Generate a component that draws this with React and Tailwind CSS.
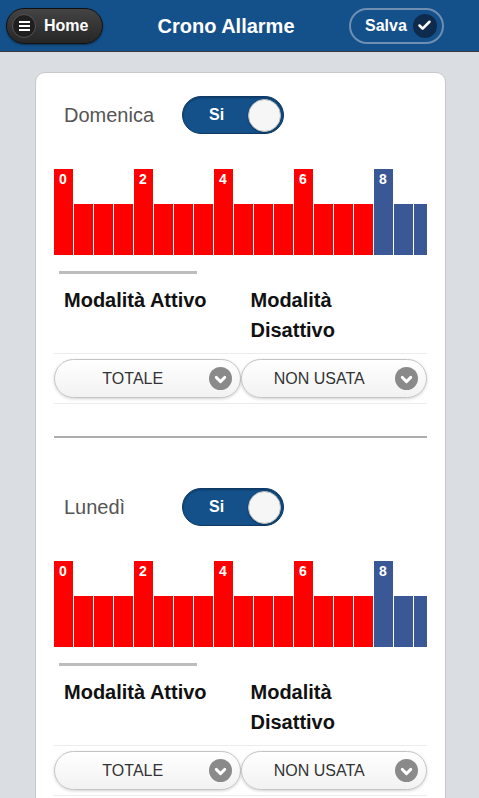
import { Check, ChevronDown } from 'lucide-react';

const days = ['Domenica', 'Lunedì'];

const bars = Array.from({ length: 19 }, (_, i) => ({
  tall: i % 4 === 0,
  label: i % 4 === 0 ? String(i / 2) : null,
  blue: i >= 16,
}));

const Toggle = () => (
  <div className="w-[102px] h-[38px] rounded-full bg-[#14508a] border border-[#0d3a66] flex items-center pl-[26px] pr-[2px] shadow-[inset_0_1px_2px_rgba(0,0,0,0.3)]">
    <span className="flex-1 text-white font-bold text-[16px]">Si</span>
    <div className="w-[33px] h-[33px] rounded-full bg-[#f6f6f6] border border-[#bbb] shadow-[0_1px_2px_rgba(0,0,0,0.3)]" />
  </div>
);

const SelectBox = ({ label }) => (
  <div className="flex-1 h-[39px] rounded-full border border-[#c4c4c4] bg-gradient-to-b from-white to-[#f2f2f2] shadow-[0_1px_3px_rgba(0,0,0,0.18)] flex items-center pl-4 pr-[8px]">
    <span className="flex-1 text-center text-[16px] text-[#333] pr-[14px]">{label}</span>
    <span className="w-[23px] h-[23px] rounded-full bg-[#8a8a8a] flex items-center justify-center">
      <ChevronDown size={17} strokeWidth={4} className="text-white mt-px" />
    </span>
  </div>
);

const DaySection = ({ name, first, last }) => (
  <div className={last ? '' : 'border-b-2 border-[#adadad] pb-8'}>
    <div className={`flex items-center h-[38px] pl-[10px] ${first ? 'mt-[23px]' : 'mt-[50px]'}`}>
      <span className="text-[20px] text-[#555] w-[118px]">{name}</span>
      <Toggle />
    </div>

    {/* chart */}
    <div className="mt-[35px] h-[86px] overflow-hidden flex items-end gap-px">
      {bars.map((b, i) => (
        <div
          key={i}
          className={`shrink-0 w-[19px] ${b.tall ? 'h-[86px]' : 'h-[51px]'} ${b.blue ? 'bg-[#3a5896]' : 'bg-[#ff0000]'} text-white font-bold text-[14px] leading-none pl-[5px] pt-[3px]`}
        >
          {b.label}
        </div>
      ))}
    </div>

    <div className="ml-[5px] mt-[16px] w-[138px] h-[3px] bg-[#bdbdbd]" />

    <div className="grid grid-cols-2 mt-[11px] pl-[10px] text-[20px] font-bold text-[#111] leading-[30px]">
      <div>Modalità Attivo</div>
      <div className="pl-[5px]">Modalità<br />Disattivo</div>
    </div>

    <div className="mt-[8px] border-t border-b border-[#ececec] py-[5px] flex">
      <SelectBox label="TOTALE" />
      <SelectBox label="NON USATA" />
    </div>
  </div>
);

export default function App() {
  return (
    <div className="min-h-[798px] bg-[#dadde1] font-['Liberation_Sans',Arial,sans-serif]">
      <header className="h-[52px] bg-[#14508a] border-b border-[#3a3a3a] flex items-center px-[6px]">
        <button className="w-[97px] h-[36px] rounded-full bg-gradient-to-b from-[#444] to-[#262626] border border-[#111] flex items-center pl-[5px] gap-[8px] shadow-[0_1px_2px_rgba(0,0,0,0.4)]">
          <span className="w-[24px] h-[24px] rounded-full bg-[#1f1f1f] border border-[#555] flex flex-col items-center justify-center gap-[2px]">
            <span className="w-[11px] h-[2px] bg-white" />
            <span className="w-[11px] h-[2px] bg-white" />
            <span className="w-[11px] h-[2px] bg-white" />
          </span>
          <span className="text-white font-bold text-[16px]">Home</span>
        </button>
        <h1 className="flex-1 text-center text-white font-bold text-[20px]">Crono Allarme</h1>
        <button className="w-[95px] h-[36px] mr-[29px] rounded-full border-2 border-[#6e8fb2] flex items-center pl-[14px] gap-[6px]">
          <span className="text-white font-bold text-[16px]">Salva</span>
          <span className="w-[24px] h-[24px] rounded-full bg-[#0e2b4d] flex items-center justify-center">
            <Check size={15} strokeWidth={4} className="text-white" />
          </span>
        </button>
      </header>

      <main className="pt-[20px] pl-[35px] pr-[33px]">
        <div className="bg-white border border-[#c8c8c8] rounded-[10px] px-[18px] pb-6">
          {days.map((d, i) => (
            <DaySection key={d} name={d} first={i === 0} last={i === days.length - 1} />
          ))}
        </div>
      </main>
    </div>
  );
}
